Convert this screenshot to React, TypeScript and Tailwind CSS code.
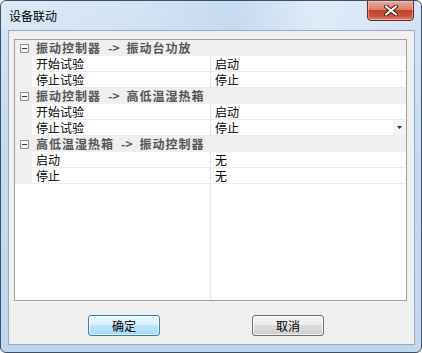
import React from "react";

const FONT = { fontFamily: '"Noto Sans CJK SC", "Noto Sans", sans-serif' };

function Header({ from, to }: { from: string; to: string }) {
  return (
    <div className="flex h-[16px] items-center bg-[#efefef] pl-[5px]">
      <div className="flex h-[9px] w-[9px] items-center justify-center border border-[#8f8f8f] bg-[#f8f8f8]">
        <div className="h-px w-[5px] bg-[#404040]" />
      </div>
      <span className="ml-[7px] flex whitespace-pre text-[12px] font-bold leading-[16px] tracking-[1px] text-[#555555]">
        <span>{from}</span>
        <span className="mx-[7px] tracking-[0px]">-&gt;</span>
        <span>{to}</span>
      </span>
    </div>
  );
}

function Row({ name, value, dropdown }: { name: string; value: string; dropdown?: boolean }) {
  return (
    <div className="flex h-[16px]">
      <div className="w-[17px] bg-[#efefef]" />
      <div className="w-[178px] border-b border-[#ececec] bg-white pl-[4px] text-[12px] leading-[15px] text-black">
        {name}
      </div>
      <div className="w-px bg-[#e4e4e4]" />
      <div className="relative flex-1 border-b border-[#ececec] bg-white pl-[4px] text-[12px] leading-[15px] text-black">
        {value}
        {dropdown && (
          <div className="absolute right-0 top-0 flex h-[15px] w-[13px] items-center justify-center bg-[#f4f4f4]">
            <svg width="5" height="3" viewBox="0 0 5 3">
              <path d="M0 0H5L2.5 3Z" fill="#1b2d6b" />
            </svg>
          </div>
        )}
      </div>
    </div>
  );
}

export default function App() {
  return (
    <div className="h-[353px] w-[422px] bg-white" style={FONT}>
      <div className="flex h-full w-full flex-col overflow-hidden rounded-[6px] border border-[#3f5064] bg-[linear-gradient(to_bottom,#d6e5f5,#c6dbf1_40%,#bfd6ee)]">
        {/* Title bar */}
        <div className="relative flex h-[29px] items-center bg-[linear-gradient(90deg,rgba(255,255,255,0.15),rgba(255,255,255,0)_30%,rgba(170,200,230,0.35)_55%,rgba(255,255,255,0.25)_75%,rgba(255,255,255,0))] pl-[8px]">
          <span className="text-[12px] leading-[14px] text-black">设备联动</span>
          <div className="absolute right-[7px] top-[-1px] flex h-[21px] w-[47px] items-center justify-center rounded-b-[4px] border border-[#6e2a21] bg-[linear-gradient(to_bottom,#e9a998,#d8806a_45%,#c0412a_50%,#c9563f_80%,#dd8b70)] shadow-[inset_0_0_0_1px_rgba(255,220,210,0.45)]">
            <svg width="14" height="11" viewBox="0 0 14 11">
              <path d="M2 1.5L12 9.5M12 1.5L2 9.5" stroke="#4a1a14" strokeWidth="4" strokeLinecap="round" />
              <path d="M2 1.5L12 9.5M12 1.5L2 9.5" stroke="#ffffff" strokeWidth="2.2" strokeLinecap="round" />
            </svg>
          </div>
        </div>

        {/* Client area */}
        <div className="ml-[7px] flex h-[315px] w-[407px] flex-col border border-[#9aabbf] bg-[#f0f0f0]">
          <div className="ml-[5px] mt-[8px] flex h-[262px] w-[393px] flex-col border border-[#a0a0a0] bg-white">
            <Header from="振动控制器" to="振动台功放" />
            <Row name="开始试验" value="启动" />
            <Row name="停止试验" value="停止" />
            <Header from="振动控制器" to="高低温湿热箱" />
            <Row name="开始试验" value="启动" />
            <Row name="停止试验" value="停止" dropdown />
            <Header from="高低温湿热箱" to="振动控制器" />
            <Row name="启动" value="无" />
            <Row name="停止" value="无" />
            <div className="flex flex-1">
              <div className="w-[195px] bg-white" />
              <div className="w-px bg-[#e8e8e8]" />
              <div className="flex-1 bg-white" />
            </div>
          </div>

          <div className="mt-[14px] flex gap-[92px] pl-[79px]">
            <button className="flex h-[21px] w-[72px] items-center justify-center rounded-[3px] border border-[#3c7fb1] bg-[linear-gradient(to_bottom,#eaf6fd,#d9f0fc_50%,#bee6fd_50%,#a7d9f5)] text-[12px] leading-[14px] text-black shadow-[inset_0_0_0_1px_rgba(255,255,255,0.6)]">
              确定
            </button>
            <button className="flex h-[21px] w-[72px] items-center justify-center rounded-[3px] border border-[#707070] bg-[linear-gradient(to_bottom,#f2f2f2,#ebebeb_50%,#dddddd_50%,#cfcfcf)] text-[12px] leading-[14px] text-black shadow-[inset_0_0_0_1px_rgba(255,255,255,0.7)]">
              取消
            </button>
          </div>
        </div>
      </div>
    </div>
  );
}
